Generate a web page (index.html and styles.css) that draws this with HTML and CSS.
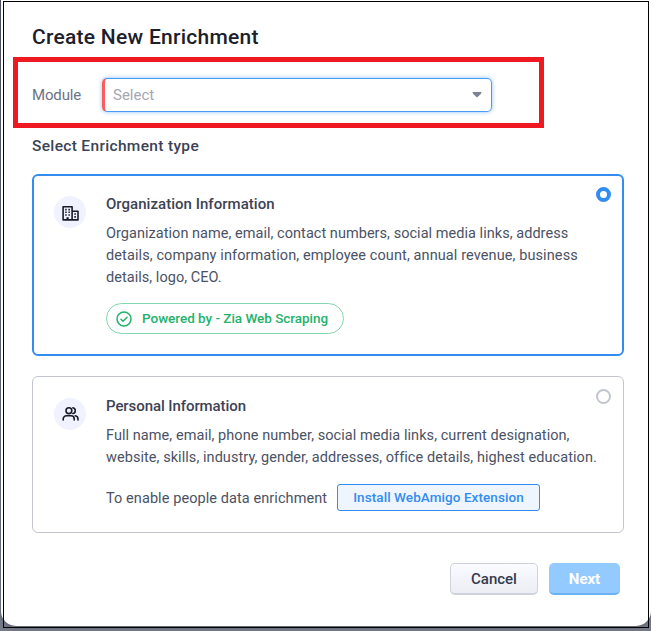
FILE: index.html
```html
<!DOCTYPE html>
<html lang="en">
<head>
<meta charset="utf-8">
<title>Create New Enrichment</title>
<link rel="stylesheet" href="styles.css">
</head>
<body>
<main class="dialog">
  <h1 class="title">Create New Enrichment</h1>
  <div class="field">
    <span class="label">Module</span>
    <div class="select"><span>Select</span><svg width="10" height="6" viewBox="0 0 10 6"><path d="M.5 0h9L9 1.7 5 5.5 1 1.7z" fill="#7c8293"/></svg></div>
  </div>
  <h2 class="subtitle">Select Enrichment type</h2>
  <section class="card card-selected">
    <div class="icon">
      <svg width="20" height="20" viewBox="0 0 20 20" fill="none" stroke="#171b26" stroke-width="1.6" stroke-linejoin="round"><path d="M3.1 16.9V3.8h9v13.1M12.1 8.2h5.9v8.7H2.6"/><path d="M7.6 17v-2.8" stroke-width="2.2"/><path d="M5.2 6.6h1.5M8.4 6.6h1.5M5.2 9.3h1.5M8.4 9.3h1.5M5.2 12h1.5M8.4 12h1.5M14.3 11h1.6M14.3 13.9h1.6"/></svg>
    </div>
    <div class="content">
      <h3>Organization Information</h3>
      <p>Organization name, email, contact numbers, social media links, address<br><span class="wide">details, company information, employee count, annual revenue, business</span><br>details, logo, CEO.</p>
      <div class="pill"><svg width="16" height="16" viewBox="0 0 16 16" fill="none" stroke="#24b26b" stroke-width="1.5" stroke-linecap="round" stroke-linejoin="round"><circle cx="8" cy="8" r="7"/><path d="M5 8.2l2 2 4-4"/></svg><span>Powered by - Zia Web Scraping</span></div>
    </div>
    <span class="radio radio-on"></span>
  </section>
  <section class="card">
    <div class="icon">
      <svg width="20" height="20" viewBox="0 0 20 20" fill="none" stroke="#171b26" stroke-width="1.6" stroke-linecap="round"><circle cx="8.9" cy="6.7" r="2.9"/><path d="M3.2 16v-1a3.2 3.2 0 0 1 3.2-3.2H11a3.2 3.2 0 0 1 3.2 3.2v1M12.9 3.8a2.9 2.9 0 0 1 0 5.7M15.2 11.8a3.2 3.2 0 0 1 2.8 3.2v1"/></svg>
    </div>
    <div class="content">
      <h3 class="snug">Personal Information</h3>
      <p class="extra">Full name, email, phone number, social media links, current designation,<br>website, skills, industry, gender, addresses, office details, highest education.</p>
      <div class="enable"><span>To enable people data enrichment</span><button class="install">Install WebAmigo Extension</button></div>
    </div>
    <span class="radio"></span>
  </section>
  <footer class="actions"><button class="cancel">Cancel</button><button class="next">Next</button></footer>
</main>
<div class="highlight"></div>
<div class="frame"></div>
</body>
</html>
```
FILE: styles.css
```css
* { box-sizing: border-box; }
body {
  margin: 0;
  height: 631px;
  padding-left: 1px;
  overflow: hidden;
  position: relative;
  background: linear-gradient(#50535f, #777c8b);
  font-family: Roboto, "Liberation Sans", sans-serif;
  font-size: 14.5px;
  color: #4b5265;
}
h1, h2, h3, p { margin: 0; }
svg { display: block; }
button { font-family: inherit; padding: 0; }
.dialog {
  height: 626px;
  padding: 22px 26px 0 31px;
  background: #fff;
  border-radius: 0 0 15px 15px;
  box-shadow: 0 1px 6px rgba(50, 55, 70, .4);
}
.title { font-size: 21px; line-height: 30px; font-weight: 500; letter-spacing: .27px; color: #1c202b; }
.field { display: flex; align-items: center; margin-top: 26px; height: 34px; }
.label { width: 70px; font-size: 15px; letter-spacing: -.15px; color: #6c7285; }
.select {
  display: flex;
  align-items: center;
  justify-content: space-between;
  width: 390px;
  height: 34px;
  padding: 0 9px 0 8px;
  border: 1px solid #4b9bf5;
  border-left: 3px solid #fc5c5c;
  border-radius: 5px;
  box-shadow: 0 0 4px rgba(44, 138, 244, .55);
  font-size: 15px;
  color: #a3a7b3;
}
.subtitle { margin-top: 23px; line-height: 22px; font-size: 15.5px; font-weight: 500; letter-spacing: .33px; color: #3c4356; }
.card {
  display: flex;
  position: relative;
  width: 592px;
  height: 157px;
  margin-top: 20px;
  padding: 18px 20px 0 21px;
  border: 1px solid #c2c5cf;
  border-radius: 6px;
}
.card-selected { height: 182px; margin-top: 17px; padding: 18px 19px 0 20px; border: 2px solid #338cf0; }
.icon { display: grid; place-items: center; flex: none; width: 32px; height: 32px; margin: 3px 20px 0 0; border-radius: 50%; background: #f0f3ff; }
.card-selected .icon { margin-top: 2px; }
.card-selected .icon svg { margin-top: 1px; }
.content { white-space: nowrap; }
h3 { font-size: 15px; line-height: 22px; font-weight: 500; color: #3c4356; }
.snug { letter-spacing: -.08px; }
.card-selected h3 { margin-top: -1px; letter-spacing: .03px; }
p { margin-top: 8px; line-height: 22px; letter-spacing: .04px; }
.wide { letter-spacing: .1px; }
.extra { letter-spacing: .06px; }
.pill {
  display: flex;
  align-items: center;
  gap: 10px;
  width: 238px;
  height: 31px;
  margin-top: 14px;
  padding: 0 0 1px 9px;
  border: 1px solid #83d6ae;
  border-radius: 16px;
  color: #24b26b;
  font-size: 13.5px;
  font-weight: 500;
  letter-spacing: -.03px;
}
.pill svg { position: relative; top: .5px; left: -.5px; }
.radio { position: absolute; top: 12px; right: 12px; width: 15px; height: 15px; border: 2px solid #c2c5cf; border-radius: 50%; }
.radio-on { top: 11px; right: 11px; border: 4px solid #338cf0; }
.enable { display: flex; align-items: center; gap: 10px; margin-top: 15px; letter-spacing: .08px; }
.enable > span { width: 221px; padding-top: 1px; }
.install { width: 203px; height: 27px; padding-bottom: 2px; border: 1px solid #338cf0; border-radius: 3px; background: #eef5ff; color: #338cf0; font-size: 13.5px; font-weight: 500; letter-spacing: .07px; }
.actions { display: flex; gap: 11px; justify-content: flex-end; width: 588px; margin-top: 30px; }
.actions button { height: 32px; border-radius: 5px; font-size: 15px; font-weight: 500; }
.cancel { width: 88px; border: 1px solid #cfd2dc; border-bottom-width: 2px; background: linear-gradient(#fbfbff, #eceef5); color: #343b4d; }
.next { width: 71px; border: 0; border-bottom: 2px solid #6cb1f4; background: #93caff; color: #fff; }
.actions .next { padding-top: 1px; font-weight: 700; }
.highlight { position: absolute; left: 13px; top: 57px; width: 531px; height: 71px; border: 5px solid #ef1921; }
.frame { position: absolute; left: 3px; top: 1px; width: 646px; height: 627px; border: 1px solid #000; }
```
